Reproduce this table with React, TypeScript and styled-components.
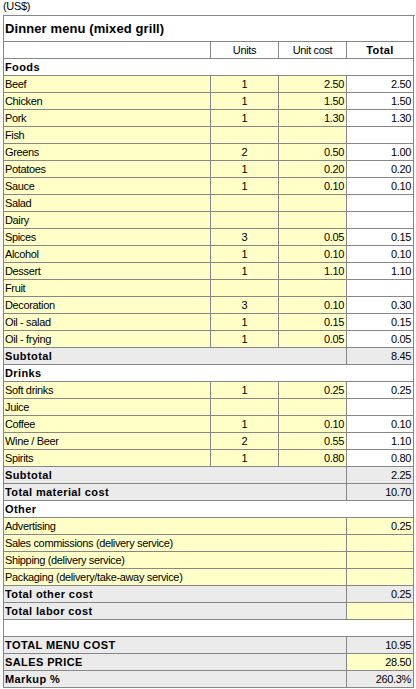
import React from 'react';
import styled, { createGlobalStyle, css } from 'styled-components';

type Fill = 'plain' | 'input' | 'calc';

const GlobalStyle = createGlobalStyle`
    html, body {
        margin: 0;
        padding: 0;
        background: #ffffff;
    }
    body {
        font-family: "Liberation Sans", Arial, sans-serif;
        color: #000000;
    }
`;

const fills: Record<Fill, string> = {
    plain: '#ffffff',
    input: '#ffffc8',
    calc: '#ebebeb',
};

const Page = styled.div`
    width: 416px;
    height: 689px;
    overflow: hidden;
`;

const Currency = styled.div`
    height: 15px;
    padding-left: 3px;
    font-size: 11px;
    line-height: 12px;
    letter-spacing: -0.35px;
`;

const Sheet = styled.div`
    margin-left: 3px;
    width: 411px;
    display: grid;
    grid-template-columns: 207px 68px 68px 67px;
    border-left: 1px solid #878787;
    border-top: 1px solid #878787;
`;

const Cell = styled.div<{
    $fill?: Fill;
    $align?: 'left' | 'center' | 'right';
    $bold?: boolean;
    $span?: number;
}>`
    box-sizing: border-box;
    height: 17px;
    border-right: 1px solid #878787;
    border-bottom: 1px solid #878787;
    background: ${p => fills[p.$fill || 'plain']};
    text-align: ${p => p.$align || 'left'};
    padding: 0 ${p => (p.$align === 'right' ? '2px' : '0')} 0 ${p => (p.$align === 'left' || !p.$align ? '1px' : '0')};
    font-size: 11px;
    line-height: 16px;
    white-space: nowrap;
    overflow: hidden;
    ${p => p.$span && css`grid-column: span ${p.$span};`}
    ${p =>
        p.$bold
            ? css`
                  font-weight: bold;
                  letter-spacing: 0.4px;
              `
            : css`
                  letter-spacing: -0.35px;
              `}
`;

const TitleCell = styled(Cell)`
    height: 26px;
    font-size: 13px;
    line-height: 25px;
    letter-spacing: 0.1px;
`;

interface Item {
    label: string;
    units?: number;
    cost?: number;
}

const foods: Item[] = [
    { label: 'Beef', units: 1, cost: 2.5 },
    { label: 'Chicken', units: 1, cost: 1.5 },
    { label: 'Pork', units: 1, cost: 1.3 },
    { label: 'Fish' },
    { label: 'Greens', units: 2, cost: 0.5 },
    { label: 'Potatoes', units: 1, cost: 0.2 },
    { label: 'Sauce', units: 1, cost: 0.1 },
    { label: 'Salad' },
    { label: 'Dairy' },
    { label: 'Spices', units: 3, cost: 0.05 },
    { label: 'Alcohol', units: 1, cost: 0.1 },
    { label: 'Dessert', units: 1, cost: 1.1 },
    { label: 'Fruit' },
    { label: 'Decoration', units: 3, cost: 0.1 },
    { label: 'Oil - salad', units: 1, cost: 0.15 },
    { label: 'Oil - frying', units: 1, cost: 0.05 },
];

const drinks: Item[] = [
    { label: 'Soft drinks', units: 1, cost: 0.25 },
    { label: 'Juice' },
    { label: 'Coffee', units: 1, cost: 0.1 },
    { label: 'Wine / Beer', units: 2, cost: 0.55 },
    { label: 'Spirits', units: 1, cost: 0.8 },
];

const other: { label: string; amount?: number }[] = [
    { label: 'Advertising', amount: 0.25 },
    { label: 'Sales commissions (delivery service)' },
    { label: 'Shipping (delivery service)' },
    { label: 'Packaging (delivery/take-away service)' },
];

const salesPrice = 28.5;

const lineTotal = (i: Item) => (i.units !== undefined && i.cost !== undefined ? i.units * i.cost : undefined);
const sum = (items: Item[]) => items.reduce((acc, i) => acc + (lineTotal(i) || 0), 0);
const money = (v?: number) => (v === undefined ? '' : v.toFixed(2));

const Section: React.FC<{ title: string }> = ({ title }) => (
    <Cell $bold $span={4}>
        {title}
    </Cell>
);

const ItemRow: React.FC<{ item: Item }> = ({ item }) => (
    <>
        <Cell $fill="input">{item.label}</Cell>
        <Cell $fill="input" $align="center">
            {item.units ?? ''}
        </Cell>
        <Cell $fill="input" $align="right">
            {money(item.cost)}
        </Cell>
        <Cell $align="right">{money(lineTotal(item))}</Cell>
    </>
);

const SumRow: React.FC<{ label: string; value: string; input?: boolean }> = ({ label, value, input }) => (
    <>
        <Cell $fill="calc" $bold $span={3}>
            {label}
        </Cell>
        <Cell $fill={input ? 'input' : 'calc'} $align="right">
            {value}
        </Cell>
    </>
);

export default function App() {
    const foodTotal = sum(foods);
    const drinkTotal = sum(drinks);
    const material = foodTotal + drinkTotal;
    const otherTotal = other.reduce((acc, o) => acc + (o.amount || 0), 0);
    const menuCost = material + otherTotal;
    const markup = (salesPrice / menuCost) * 100;

    return (
        <Page>
            <GlobalStyle />
            <Currency>(US$)</Currency>
            <Sheet>
                <TitleCell $bold $span={4}>
                    Dinner menu (mixed grill)
                </TitleCell>

                <Cell />
                <Cell $align="center">Units</Cell>
                <Cell $align="center">Unit cost</Cell>
                <Cell $align="center" $bold>
                    Total
                </Cell>

                <Section title="Foods" />
                {foods.map(f => (
                    <ItemRow key={f.label} item={f} />
                ))}
                <SumRow label="Subtotal" value={money(foodTotal)} />

                <Section title="Drinks" />
                {drinks.map(d => (
                    <ItemRow key={d.label} item={d} />
                ))}
                <SumRow label="Subtotal" value={money(drinkTotal)} />
                <SumRow label="Total material cost" value={money(material)} />

                <Section title="Other" />
                {other.map(o => (
                    <React.Fragment key={o.label}>
                        <Cell $fill="input" $span={3}>
                            {o.label}
                        </Cell>
                        <Cell $fill="input" $align="right">
                            {money(o.amount)}
                        </Cell>
                    </React.Fragment>
                ))}
                <SumRow label="Total other cost" value={money(otherTotal)} />
                <SumRow label="Total labor cost" value="" input />

                <Cell $span={4} />

                <SumRow label="TOTAL MENU COST" value={money(menuCost)} />
                <SumRow label="SALES PRICE" value={money(salesPrice)} input />
                <SumRow label="Markup %" value={`${markup.toFixed(1)}%`} />
            </Sheet>
        </Page>
    );
}
